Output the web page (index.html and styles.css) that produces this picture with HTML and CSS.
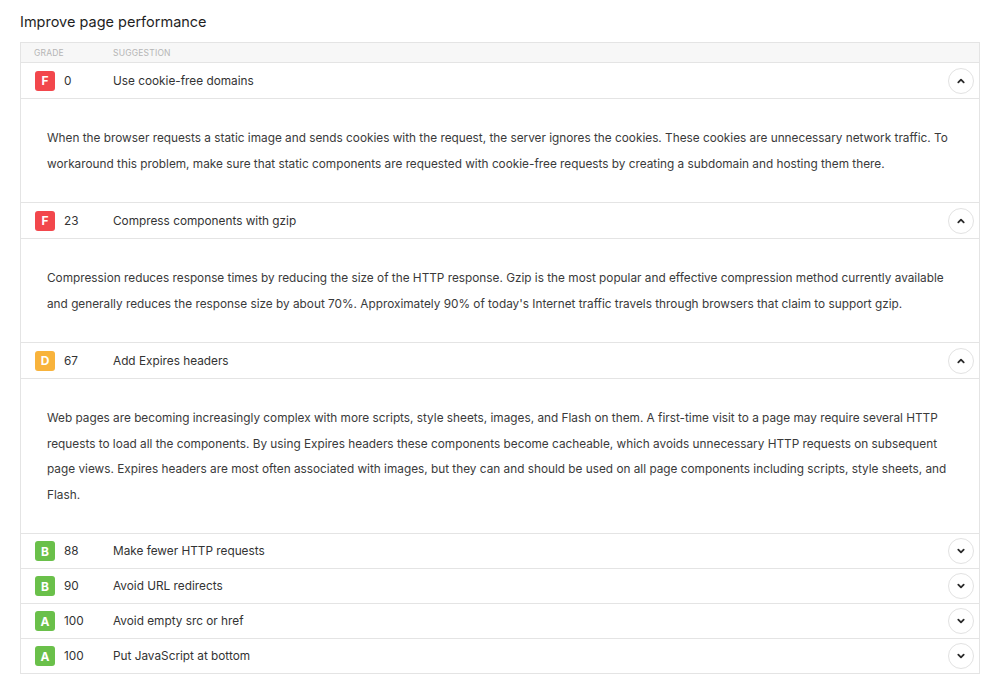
FILE: index.html
```html
<!DOCTYPE html>
<html lang="en">
<head>
  <meta charset="UTF-8" />
  <meta name="viewport" content="width=device-width, initial-scale=1" />
  <title>Improve page performance</title>
  <link rel="stylesheet" href="styles.css">
</head>
<body>
  <h2 class="title">Improve page performance</h2>

  <div class="grades">
    <div class="grades-head">
      <span class="col-grade">Grade</span>
      <span class="col-suggestion">Suggestion</span>
    </div>

    <div class="item open">
      <div class="item-row">
        <span class="badge grade-f">F</span>
        <span class="score">0</span>
        <span class="name">Use cookie-free domains</span>
        <button class="toggle" aria-label="Collapse">
          <svg viewBox="0 0 10 10" width="10" height="10"><path d="M2.3 6.3 L5 3.6 L7.7 6.3" /></svg>
        </button>
      </div>
      <div class="item-body">
        When the browser requests a static image and sends cookies with the request, the server ignores the cookies. These cookies are unnecessary network traffic. To workaround this problem, make sure that static components are requested with cookie-free requests by creating a subdomain and hosting them there.
      </div>
    </div>

    <div class="item open">
      <div class="item-row">
        <span class="badge grade-f">F</span>
        <span class="score">23</span>
        <span class="name">Compress components with gzip</span>
        <button class="toggle" aria-label="Collapse">
          <svg viewBox="0 0 10 10" width="10" height="10"><path d="M2.3 6.3 L5 3.6 L7.7 6.3" /></svg>
        </button>
      </div>
      <div class="item-body">
        Compression reduces response times by reducing the size of the HTTP response. Gzip is the most popular and effective compression method currently available and generally reduces the response size by about 70%. Approximately 90% of today's Internet traffic travels through browsers that claim to support gzip.
      </div>
    </div>

    <div class="item open">
      <div class="item-row">
        <span class="badge grade-d">D</span>
        <span class="score">67</span>
        <span class="name">Add Expires headers</span>
        <button class="toggle" aria-label="Collapse">
          <svg viewBox="0 0 10 10" width="10" height="10"><path d="M2.3 6.3 L5 3.6 L7.7 6.3" /></svg>
        </button>
      </div>
      <div class="item-body">
        Web pages are becoming increasingly complex with more scripts, style sheets, images, and Flash on them. A first-time visit to a page may require several HTTP requests to load all the components. By using Expires headers these components become cacheable, which avoids unnecessary HTTP requests on subsequent page views. Expires headers are most often associated with images, but they can and should be used on all page components including scripts, style sheets, and Flash.
      </div>
    </div>

    <div class="item">
      <div class="item-row">
        <span class="badge grade-b">B</span>
        <span class="score">88</span>
        <span class="name">Make fewer HTTP requests</span>
        <button class="toggle" aria-label="Expand">
          <svg viewBox="0 0 10 10" width="10" height="10"><path d="M2.3 3.7 L5 6.4 L7.7 3.7" /></svg>
        </button>
      </div>
    </div>

    <div class="item">
      <div class="item-row">
        <span class="badge grade-b">B</span>
        <span class="score">90</span>
        <span class="name">Avoid URL redirects</span>
        <button class="toggle" aria-label="Expand">
          <svg viewBox="0 0 10 10" width="10" height="10"><path d="M2.3 3.7 L5 6.4 L7.7 3.7" /></svg>
        </button>
      </div>
    </div>

    <div class="item">
      <div class="item-row">
        <span class="badge grade-a">A</span>
        <span class="score">100</span>
        <span class="name">Avoid empty src or href</span>
        <button class="toggle" aria-label="Expand">
          <svg viewBox="0 0 10 10" width="10" height="10"><path d="M2.3 3.7 L5 6.4 L7.7 3.7" /></svg>
        </button>
      </div>
    </div>

    <div class="item">
      <div class="item-row">
        <span class="badge grade-a">A</span>
        <span class="score">100</span>
        <span class="name">Put JavaScript at bottom</span>
        <button class="toggle" aria-label="Expand">
          <svg viewBox="0 0 10 10" width="10" height="10"><path d="M2.3 3.7 L5 6.4 L7.7 3.7" /></svg>
        </button>
      </div>
    </div>
  </div>
</body>
</html>
```

FILE: styles.css
```css
/* ==============================================
   PAGE
   ============================================== */
body {
  margin: 0;
  padding: 11px 20px 20px 20px;
  font-family: Inter, "Noto Sans", sans-serif;
  background: #ffffff;
  color: #333333;
}

.title {
  margin: 0 0 10px 0;
  font-size: 14.5px;
  font-weight: 400;
  line-height: 21px;
  color: #1f1f1f;
}

/* ==============================================
   GRADES TABLE
   ============================================== */
.grades {
  width: 960px;
  box-sizing: border-box;
  border: 1px solid #e4e4e4;
  border-bottom: none;
}

.grades-head {
  display: flex;
  align-items: center;
  height: 19px;
  background: #f7f7f7;
  border-bottom: 1px solid #e4e4e4;
  font-size: 8.5px;
  letter-spacing: 0.2px;
  text-transform: uppercase;
  color: #b5b5b5;
}
.col-grade {
  width: 79px;
  padding-left: 13px;
}

.item {
  border-bottom: 1px solid #e4e4e4;
}

.item-row {
  display: flex;
  align-items: center;
  height: 34px;
  font-size: 11.8px;
  color: #333333;
}
.item.open .item-row {
  height: 35px;
  border-bottom: 1px solid #e4e4e4;
}

.badge {
  display: flex;
  align-items: center;
  justify-content: center;
  width: 20px;
  height: 20px;
  margin-left: 14px;
  border-radius: 3px;
  color: #ffffff;
  font-size: 12px;
  font-weight: 700;
}
.grade-f { background: #f2474c; }
.grade-d { background: #f8b33c; }
.grade-b { background: #6ac04a; }
.grade-a { background: #6ac04a; }

.score {
  width: 49px;
  padding-left: 9px;
}

.name {
  flex: 1;
}

.toggle {
  display: flex;
  align-items: center;
  justify-content: center;
  width: 26px;
  height: 26px;
  margin-right: 5px;
  padding: 0;
  border: 1px solid #e2e2e2;
  border-radius: 50%;
  background: #ffffff;
  cursor: pointer;
}
.toggle svg path {
  fill: none;
  stroke: #2a2a2a;
  stroke-width: 1.8;
  stroke-linecap: round;
  stroke-linejoin: round;
}

.item-body {
  padding: 27px 26px 25px 26px;
  font-size: 11.8px;
  line-height: 25.5px;
  color: #3a3a3a;
}
```
